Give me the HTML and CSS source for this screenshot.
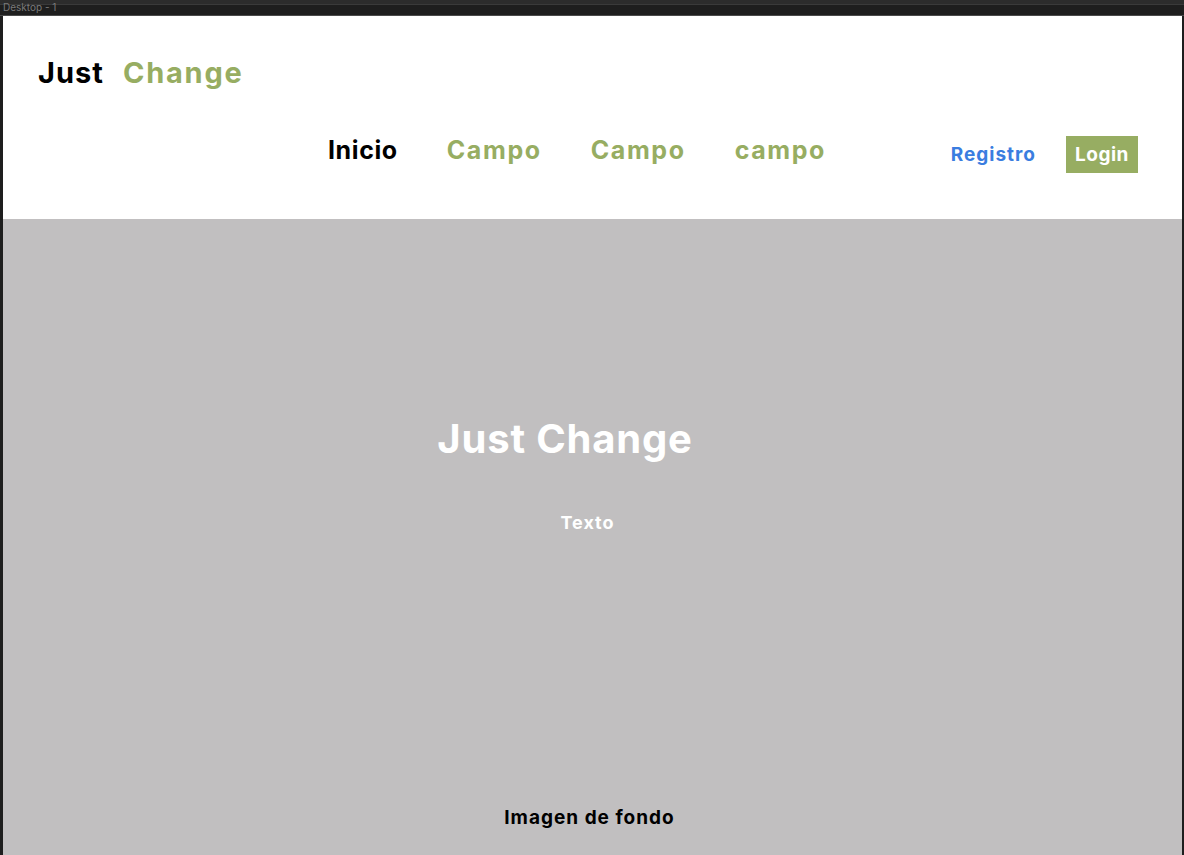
FILE: index.html
```html
<!DOCTYPE html>
<html lang="es">
<head>
<meta charset="utf-8">
<title>Just Change</title>
<link rel="stylesheet" href="styles.css">
</head>
<body>
<div class="topbar"><span class="frame-label">Desktop - 1</span></div>
<div class="frame">
  <header class="header">
    <div class="logo"><span class="logo-just">Just</span><span class="logo-change">Change</span></div>
    <div class="navrow">
      <nav class="nav">
        <a class="nav-link active">Inicio</a>
        <a class="nav-link">Campo</a>
        <a class="nav-link">Campo</a>
        <a class="nav-link">campo</a>
      </nav>
      <div class="auth">
        <a class="register">Registro</a>
        <a class="login">Login</a>
      </div>
    </div>
  </header>
  <section class="hero">
    <h1 class="hero-title">Just Change</h1>
    <p class="hero-text">Texto</p>
    <p class="hero-bg">Imagen de fondo</p>
  </section>
</div>
</body>
</html>
```
FILE: styles.css
```css
html, body {
  margin: 0;
  padding: 0;
  height: 100%;
  overflow: hidden;
}
body {
  background: #1e1e1e;
  font-family: Inter, "Noto Sans", sans-serif;
  font-weight: 700;
}
.topbar {
  height: 16px;
  background: linear-gradient(#2c2c2c 0, #2c2c2c 4px, #3a3a3a 4px, #3a3a3a 5px, #1e1e1e 5px, #1e1e1e 15px, #4a4a4a 15px);
  position: relative;
}
.frame-label {
  position: absolute;
  left: 3px;
  top: 1px;
  font-size: 10px;
  line-height: 12px;
  font-weight: 400;
  color: #7a7a7a;
}
.frame {
  margin-left: 3px;
  width: 1179px;
  height: 839px;
  background: #c1bfc0;
  display: flex;
  flex-direction: column;
}
.header {
  height: 203px;
  background: #ffffff;
  box-sizing: border-box;
  padding: 39px 44px 0 35px;
}
.logo {
  display: flex;
  gap: 19px;
  font-size: 29px;
  line-height: 36px;
}
.logo-just { color: #000; letter-spacing: 1px; }
.logo-change { color: #97ad62; letter-spacing: 1.8px; }
.navrow {
  display: flex;
  align-items: center;
  margin-top: 45px;
}
.nav {
  display: flex;
  gap: 49px;
  margin-left: 290px;
  margin-top: -10px;
}
.nav-link {
  font-size: 25px;
  line-height: 32px;
  letter-spacing: 1.6px;
  color: #97ad62;
}
.nav-link.active { color: #000; letter-spacing: 0.6px; }
.auth {
  margin-left: auto;
  display: flex;
  align-items: center;
  gap: 30px;
}
.register {
  font-size: 19px;
  letter-spacing: 1px;
  color: #3a7de0;
}
.login {
  width: 72px;
  height: 37px;
  box-sizing: border-box;
  display: flex;
  align-items: center;
  justify-content: center;
  background: #97ad62;
  color: #fff;
  font-size: 19px;
  letter-spacing: 0.5px;
}
.hero {
  flex: 1;
  display: flex;
  flex-direction: column;
  align-items: center;
  color: #fff;
}
.hero-title {
  margin: 196px 55px 0 0;
  font-size: 40px;
  line-height: 48px;
  font-weight: 700;
  letter-spacing: 0.8px;
}
.hero-text {
  margin: 48px 10px 0 0;
  font-size: 18px;
  line-height: 24px;
  letter-spacing: 1px;
}
.hero-bg {
  margin: auto 6px 25px 0;
  font-size: 19px;
  line-height: 24px;
  letter-spacing: 1px;
  color: #000;
}
```
